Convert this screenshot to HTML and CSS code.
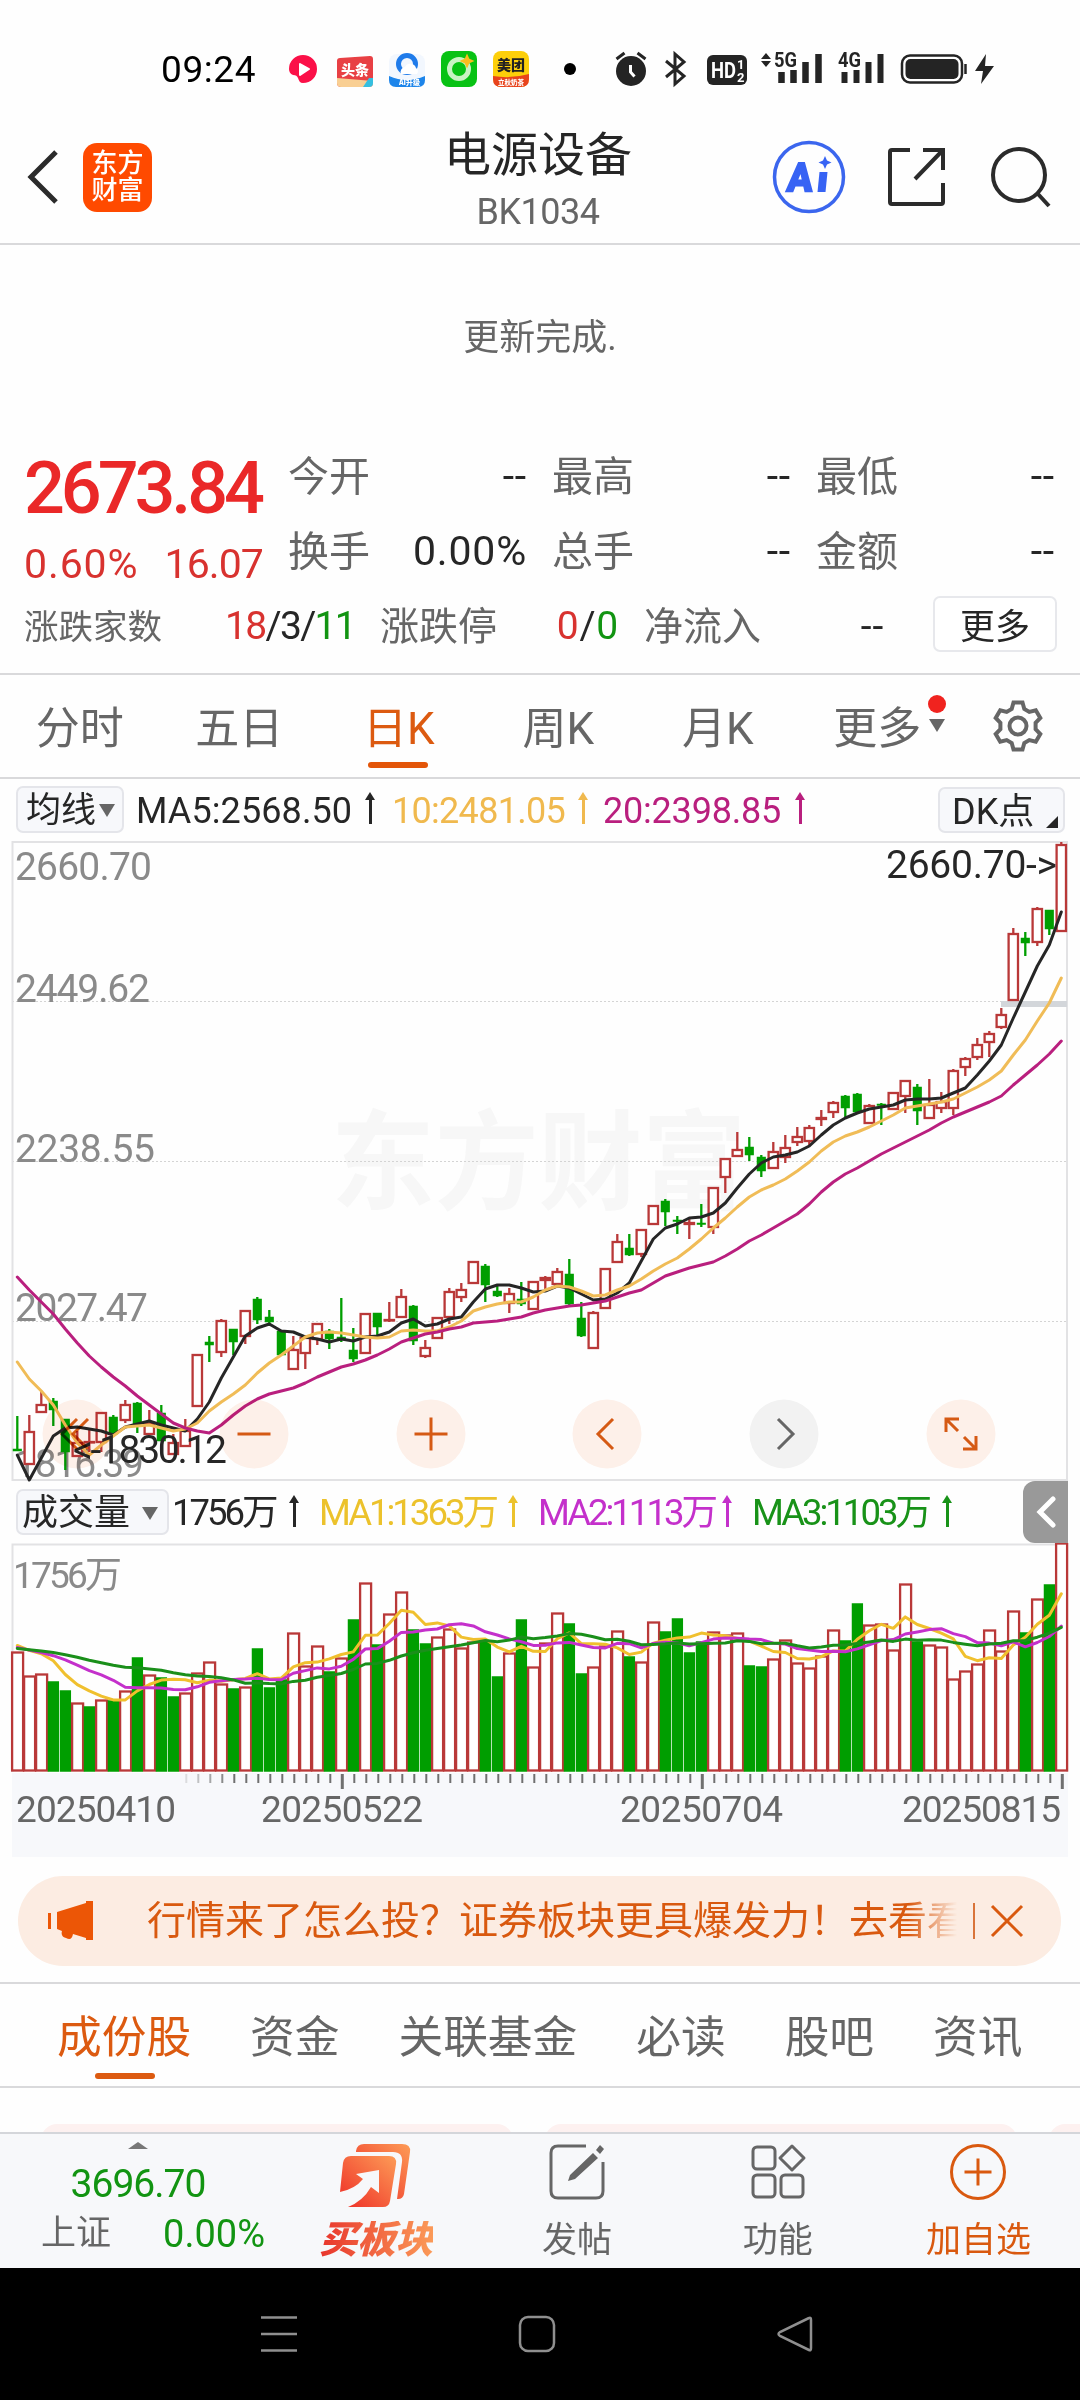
FILE: index.html
```
<!DOCTYPE html>
<html lang="zh-CN">
  <head>
    <meta charset="UTF-8" />
    <meta name="viewport" content="width=device-width, initial-scale=1.0" />
    <title>电源设备 BK1034</title>
    <link rel="stylesheet" href="styles.css">
  </head>
  <body>
    <div class="statusbar">
      <span class="time">09:24</span>
      <svg class="apps" width="300" height="44" viewBox="284 47 300 44">
        <path d="M303 55a14 14 0 0 1 14 14c0 8-6 14-14 14-3 0-4-2-5-5-1-2-2-3-5-3-3-1-4-4-4-6a14 14 0 0 1 14-14z" fill="#fb1048" />
        <path d="M300 64l9 5-9 6z" fill="#fff" stroke="#fff" stroke-width="2" stroke-linejoin="round" />
        <path d="M337 61q0-3 3-3l30-2q3 0 3 3v24q0 4-4 4h-28q-4 0-4-4z" fill="#e84044" />
        <path d="M337 78l36 3v2q0 4-4 4h-28q-4 0-4-4z" fill="#f9cf93" />
        <path d="M363 87l6-9h4v5q0 4-4 4z" fill="#35bfe0" />
        <text x="341" y="75" class="app-text" font-size="14" fill="#fff">头条</text>
        <rect x="389" y="54" width="36" height="33" rx="8" fill="#f2f7fe" />
        <path d="M389 76q18 8 36 0v4q0 7-7 7h-22q-7 0-7-7z" fill="#1d85ea" />
        <circle cx="407" cy="64" r="8.500" fill="none" stroke="#1f7bea" stroke-width="5" />
        <path d="M401 74a5 5 0 0 1 4-7 6 6 0 0 1 11 1 4 4 0 0 1 1 6z" fill="#fff" />
        <text x="399" y="85" class="app-text" font-size="7" fill="#fff">AI升级</text>
        <rect x="441" y="51" width="36" height="36" rx="8" fill="#08c214" />
        <circle cx="459" cy="69" r="9.500" fill="none" stroke="#c9f3c4" stroke-width="5" />
        <path d="M467 56l1.500 3.500 3.500 1.500-3.500 1.500-1.500 3.500-1.500-3.500-3.500-1.500 3.500-1.500z" fill="#fbbd1e" stroke="#fbbd1e" stroke-width="2" />
        <rect x="493" y="51" width="36" height="36" rx="8" fill="#fdcf0a" />
        <path d="M493 76q18 3 36-2v5q0 8-8 8h-20q-8 0-8-8z" fill="#e8431c" />
        <text x="497" y="70" class="app-text" font-size="14" fill="#222">美团</text>
        <text x="498" y="85" class="app-text" font-size="6.500" fill="#fff">立秋奶茶</text>
        <circle cx="570" cy="69" r="6" fill="#000" />
      </svg>
      <svg class="system" width="386" height="44" viewBox="612 47 386 44">
        <circle cx="631" cy="71" r="15" fill="#242424" />
        <path d="M616.500 59l8-6M645.500 59l-8-6" stroke="#242424" stroke-width="3" />
        <path d="M630.500 65v7l4 4.500" stroke="#fff" stroke-width="3" fill="none" />
        <path d="M666 61l18 15-9 8V54l9 8-18 15" fill="none" stroke="#242424" stroke-width="3" />
        <rect x="707" y="55" width="40" height="30" rx="6" fill="#242424" />
        <text x="711" y="78" class="bold" font-size="22" fill="#fff" textLength="25" lengthAdjust="spacingAndGlyphs">HD</text>
        <text x="737" y="69" class="bold" font-size="13" fill="#fff">1</text>
        <text x="737" y="82" class="bold" font-size="13" fill="#fff">2</text>
        <path d="M761 59l5-6 5 6zM761 61l5 6 5-6z" fill="#242424" />
        <text x="774" y="67" class="bold" font-size="20" fill="#242424" textLength="23" lengthAdjust="spacingAndGlyphs">5G</text>
        <path d="M781.500 83V72M793.500 83V70M805.500 83V62M818.500 83V54" stroke="#242424" stroke-width="6.500" />
        <text x="838" y="67" class="bold" font-size="20" fill="#242424" textLength="23" lengthAdjust="spacingAndGlyphs">4G</text>
        <path d="M844.500 83V72M856.500 83V70M868.500 83V62M880.500 83V54" stroke="#242424" stroke-width="6" />
        <rect x="902" y="55.500" width="60" height="27" rx="8" fill="#fff" stroke="#242424" stroke-width="2.500" />
        <rect x="905.500" y="59" width="53" height="20" rx="5" fill="#242424" />
        <path d="M965.500 64v10" stroke="#242424" stroke-width="2.500" />
        <path d="M986 54l-11 17h8l-2 13 13-18h-9z" fill="#242424" />
      </svg>
    </div>

    <div class="header">
      <svg class="back" width="34" height="56" viewBox="0 0 34 56"><path d="M30 3L5 28l25 25" fill="none" stroke="#2b2b2b" stroke-width="5" /></svg>
      <div class="logo">东方<br>财富</div>
      <div class="titles">
        <div class="title">电源设备</div>
        <div class="code">BK1034</div>
      </div>
      <svg class="ai" width="74" height="74" viewBox="0 0 74 74">
        <circle cx="37" cy="37" r="34.500" fill="none" stroke="#3b66ee" stroke-width="3.500" />
        <text x="15" y="51" class="bold" font-size="39" fill="#3763f4" stroke="#3763f4" stroke-width="2.500" transform="skewX(-5) translate(4 0)" textLength="25" lengthAdjust="spacingAndGlyphs">A</text>
        <path d="M47.500 32h8l-2 20h-8z" fill="#3763f4" />
        <path d="M53 16l2 4.500 4.500 2-4.500 2-2 4.500-2-4.500-4.500-2 4.500-2z" fill="#3763f4" />
      </svg>
      <svg class="share" width="60" height="60" viewBox="0 0 60 60">
        <path d="M23 3H5q-2 0-2 2v50q0 2 2 2h49q2 0 2-2V36M36 3h20v20M56 3L28 32" fill="none" stroke="#2b2b2b" stroke-width="4" />
      </svg>
      <svg class="search" width="62" height="62" viewBox="0 0 62 62">
        <circle cx="29" cy="29" r="26" fill="none" stroke="#2b2b2b" stroke-width="4" />
        <path d="M48 48l11 12" stroke="#2b2b2b" stroke-width="4" />
      </svg>
    </div>

    <div class="refresh">更新完成.</div>

    <div class="quote">
      <div class="price-box">
        <div class="price">2673.84</div>
        <div class="change"><span>0.60%</span><span>16.07</span></div>
      </div>
      <div class="stats">
        <div class="stat"><span>今开</span><b>--</b></div>
        <div class="stat"><span>最高</span><b>--</b></div>
        <div class="stat"><span>最低</span><b>--</b></div>
        <div class="stat"><span>换手</span><b>0.00%</b></div>
        <div class="stat"><span>总手</span><b>--</b></div>
        <div class="stat"><span>金额</span><b>--</b></div>
      </div>
    </div>
    <div class="breadth">
      <div class="stat count"><span>涨跌家数</span><b><i class="up">18</i>/3/<i class="down">11</i></b></div>
      <div class="stat limit"><span>涨跌停</span><b><i class="up">0</i>/<i class="down">0</i></b></div>
      <div class="stat inflow"><span>净流入</span><b>--</b></div>
      <button class="more-btn">更多</button>
    </div>

    <div class="period">
      <div>分时</div>
      <div>五日</div>
      <div class="active">日K</div>
      <div>周K</div>
      <div>月K</div>
      <div class="more">更多<i class="dot"></i><i class="caret"></i></div>
      <svg class="gear" width="54" height="54" viewBox="0 0 54 54">
        <path d="M22.500 3.500h9l1.800 6.500 5 2.900 6.500-1.700 4.500 7.800-4.700 4.800v6.400l4.700 4.800-4.500 7.800-6.500-1.700-5 2.900-1.800 6.500h-9l-1.800-6.500-5-2.900-6.500 1.700-4.500-7.800 4.700-4.800v-6.400l-4.700-4.800 4.500-7.800 6.500 1.700 5-2.900z" fill="none" stroke="#666" stroke-width="4" />
        <circle cx="27" cy="27" r="8.500" fill="none" stroke="#666" stroke-width="4" />
      </svg>
    </div>

    <div class="indicator ma">
      <div class="select">均线<i class="caret"></i></div>
      <span class="c-black">MA5:2568.50</span><i class="arrow c-black"></i>
      <span class="c-gold">10:2481.05</span><i class="arrow c-gold"></i>
      <span class="c-pink">20:2398.85</span><i class="arrow c-pink"></i>
      <div class="dk">DK点<i></i></div>
    </div>

    <div class="kline">
      <svg id="kline" width="1080" height="644" viewBox="0 0 1080 644">
        <text class="watermark" x="331" y="361" textLength="415" lengthAdjust="spacingAndGlyphs">东方财富</text>
        <g class="grid">
          <path d="M12 161.500H1068M12 321.500H1068M12 481.500H1068" />
        </g>
        <path class="frame" d="M12.500 640V2H1067V640z" />
        <rect x="1001" y="161" width="66" height="6" fill="#d3d6da" />
        <g class="axis">
          <text x="15" y="40" textLength="137">2660.70</text>
          <text x="15" y="162" textLength="135">2449.62</text>
          <text x="15" y="322" textLength="140">2238.55</text>
          <text x="15" y="481" textLength="133">2027.47</text>
          <text x="15" y="637" textLength="129">1816.39</text>
        </g>
      </svg>
      <div class="tools">
        <svg viewBox="-35 -35 70 70"><circle r="34.500" /><path d="M0-15L-15 0 0 15M11-15L-4 0 11 15" /></svg>
        <svg viewBox="-35 -35 70 70"><circle r="34.500" /><path d="M-16.500 0h33" /></svg>
        <svg viewBox="-35 -35 70 70"><circle r="34.500" /><path d="M-16.500 0h33M0-16.500v33" /></svg>
        <svg viewBox="-35 -35 70 70"><circle r="34.500" /><path d="M6-15L-9 0 6 15" /></svg>
        <svg class="off" viewBox="-35 -35 70 70"><circle r="34.500" /><path d="M-6-15L9 0-6 15" /></svg>
        <svg viewBox="-35 -35 70 70"><circle r="34.500" /><path d="M-2-15h-13V-2M-15-15L-3-3M2 15h13V2M15 15L3 3" /></svg>
      </div>
    </div>

    <div class="indicator vol">
      <div class="select">成交量<i class="caret"></i></div>
      <span class="c-black">1756万</span><i class="arrow c-black"></i>
      <span class="c-yellow">MA1:1363万</span><i class="arrow c-yellow"></i>
      <span class="c-violet">MA2:1113万</span><i class="arrow c-violet"></i>
      <span class="c-green">MA3:1103万</span><i class="arrow c-green"></i>
      <div class="fold"><svg width="20" height="32" viewBox="0 0 20 32"><path d="M17 3L4 16l13 13" /></svg></div>
    </div>

    <svg id="volume" width="1080" height="230" viewBox="0 0 1080 230">
      <path class="frame" d="M12.500 229V1.500H1067V229" />
      <text class="axis" x="13" y="45" textLength="109">1756万</text>
    </svg>
    <svg id="dates" width="1056" height="84" viewBox="12 1773 1056 84"></svg>

    <div class="banner">
      <svg width="46" height="40" viewBox="0 0 46 40"><path d="M1.500 12v16" stroke="#ec5606" stroke-width="3" /><path d="M9 11L38 2V0h7v39h-7v-2l-13-4c-1 5-3 6-7 4-4-1-5-4-4-7l-5-2z" fill="#ec5606" /></svg>
      <div class="marquee">行情来了怎么投？证券板块更具爆发力！去看看</div>
      <i class="split"></i>
      <svg class="close" width="34" height="34" viewBox="0 0 34 34"><path d="M2 2l30 30M32 2L2 32" stroke="#d9590f" stroke-width="3" /></svg>
    </div>

    <div class="sections">
      <div class="active">成份股</div>
      <div>资金</div>
      <div>关联基金</div>
      <div>必读</div>
      <div>股吧</div>
      <div>资讯</div>
    </div>
    <div class="cards"><i></i><i></i><i></i></div>

    <div class="bottombar">
      <div class="index">
        <i class="tri"></i>
        <div class="value">3696.70</div>
        <div class="row"><span>上证</span><b>0.00%</b></div>
      </div>
      <div class="item buy">
        <svg width="72" height="66" viewBox="0 0 72 66">
          <defs>
            <linearGradient id="hot" x1="0" y1="1" x2="1" y2="0">
              <stop offset="0" stop-color="#ee2d26" />
              <stop offset="1" stop-color="#fd9c57" />
            </linearGradient>
          </defs>
          <path d="M16 8q1-7 8-7h38q9 0 8 8l-6 42q-1 5-6 5h-1l5-37q1-10-9-10H16z" fill="url(#hot)" />
          <path d="M3 20q1-7 8-7h38q8 0 7 8l-6 37q-1 6-7 6H8q15-6 23-20l8 6V27l-23 4 7 5Q15 46 0 49z" fill="url(#hot)" />
        </svg>
        <span>买板块</span>
      </div>
      <div class="item">
        <svg width="58" height="58" viewBox="0 0 58 58"><path d="M38 3H10q-7 0-7 7v38q0 7 7 7h38q7 0 7-7V19" fill="none" stroke="#666" stroke-width="3" /><path d="M48 7l4-5 4 4-4 5zM45 10l5 5-23 21-7 2 2-6z" fill="#666" /></svg>
        <span>发帖</span>
      </div>
      <div class="item">
        <svg width="58" height="58" viewBox="0 0 58 58"><g fill="none" stroke="#666" stroke-width="3"><rect x="4" y="4" width="22" height="22" rx="4" /><rect x="4" y="32" width="22" height="22" rx="4" /><rect x="32" y="32" width="22" height="22" rx="4" /><path d="M43 3l12 12-12 12-12-12z" stroke-linejoin="round" /></g></svg>
        <span>功能</span>
      </div>
      <div class="item add">
        <svg width="58" height="58" viewBox="0 0 58 58"><circle cx="29" cy="29" r="26.500" /><path d="M15.500 29h27M29 15.500v27" /></svg>
        <span>加自选</span>
      </div>
    </div>
    <div class="navbar">
      <svg width="38" height="38" viewBox="0 0 38 38"><path d="M1 2.500h36M1 19h36M1 35.500h36" /></svg>
      <svg width="38" height="38" viewBox="0 0 38 38"><rect x="2" y="2" width="34" height="34" rx="8" /></svg>
      <svg width="38" height="38" viewBox="0 0 38 38"><path d="M33 3L4 17q-3 2 0 4l29 14q2 1 2-2V5q0-3-2-2z" /></svg>
    </div>

    <script src="chart.js"></script>
  </body>
</html>
```
FILE: styles.css
```
* {
  box-sizing: border-box;
}

body {
  width: 1080px;
  height: 2400px;
  margin: 0;
  overflow: hidden;
  background-color: #fefefe;
  color: #262626;
  font-family: Roboto, "Noto Sans CJK SC", sans-serif;
  font-weight: 400;
  line-height: 1;
}

svg {
  display: block;
  flex: none;
}

i, b {
  font-style: normal;
  font-weight: inherit;
}

.up { color: #d8322f; }
.down { color: #129412; }
.bold { font-weight: 700; }

/* status bar */
.statusbar {
  display: flex;
  height: 122px;
  padding: 47px 0 0 161px;
}

.time {
  width: 123px;
  font-size: 37px;
  letter-spacing: 0.6px;
  line-height: 46px;
  color: #000;
}

.app-text {
  font-weight: 900;
  font-family: "Noto Sans CJK SC", sans-serif;
}

.system {
  margin-left: 28px;
}

/* header */
.header {
  display: flex;
  align-items: center;
  height: 123px;
  padding: 0 26px 11px;
  border-bottom: 2px solid #d9d9db;
}

.logo {
  width: 69px;
  height: 69px;
  margin-left: 23px;
  padding-top: 7px;
  border-radius: 14px;
  background-color: #ff4a00;
  color: #fff;
  font-size: 26px;
  font-weight: 500;
  line-height: 27px;
  text-align: center;
}

.titles {
  flex: 1;
  padding: 10px 0 0 289px;
  text-align: center;
  white-space: nowrap;
}

.title {
  font-size: 47px;
  line-height: 52px;
  color: #262626;
}

.code {
  margin-top: 7px;
  font-size: 36px;
  letter-spacing: -0.5px;
  line-height: 48px;
  color: #666;
}

.ai {
  margin-left: 137px;
}

.share {
  margin-left: 41px;
}

.search {
  margin: 0 2px 0 43px;
}

.refresh {
  height: 194px;
  padding-top: 75px;
  color: #666;
  font-size: 36px;
  text-align: center;
}

/* quote */
.quote {
  display: flex;
  height: 152px;
  padding-left: 24px;
}

.price-box {
  width: 264px;
  padding-top: 3px;
  color: #d8322f;
}

.price {
  height: 93px;
  color: #ea2828;
  font-size: 72px;
  font-weight: 500;
  letter-spacing: -4.1px;
  line-height: 93px;
}

.change {
  display: flex;
  justify-content: space-between;
  width: 239px;
  font-size: 41px;
  line-height: 58px;
  letter-spacing: -0.9px;
}

.change span:first-child {
  letter-spacing: 0.9px;
}

.stats {
  display: grid;
  grid-template-columns: repeat(3, 239px);
  grid-auto-rows: 75px;
  column-gap: 25px;
}

.stat {
  display: flex;
  align-items: center;
  justify-content: space-between;
  font-size: 41px;
}

.stat span {
  padding-top: 2px;
  color: #666;
}

.stat b {
  letter-spacing: 0.8px;
}

.breadth {
  display: flex;
  align-items: center;
  height: 84px;
  padding: 0 0 12px 24px;
  border-bottom: 2px solid #d9d9db;
}

.breadth .stat {
  font-size: 39px;
}

.count { width: 331px; }
.breadth .count b { letter-spacing: -1.7px; }
.count span { font-size: 34.5px; }
.limit { width: 239px; margin-left: 25px; }
.inflow { width: 240px; margin-left: 25px; }

.more-btn {
  width: 124px;
  height: 56px;
  margin: 0 0 4px 49px;
  padding: 0 0 3px;
  border: 2px solid #e7e8ec;
  border-radius: 7px;
  background-color: #fff;
  color: #262626;
  font: 35px "Noto Sans CJK SC", sans-serif;
}

/* period tabs */
.period {
  display: grid;
  grid-template-columns: repeat(6, 159.5px) 1fr;
  align-items: center;
  height: 104px;
  border-bottom: 2px solid #d9d9db;
  color: #666;
  font-size: 44px;
  text-align: center;
}

.period > div {
  position: relative;
  padding-top: 6px;
}

.gear {
  margin-left: 34px;
}

.period .active,
.sections .active {
  color: #dc5a10;
}

.period .active::after {
  content: "";
  position: absolute;
  left: 49px;
  top: 61px;
  width: 60px;
  height: 6px;
  border-radius: 3px;
  background-color: #e35509;
}

.period .dot {
  position: absolute;
  right: 11px;
  top: -6px;
  width: 18px;
  height: 18px;
  border-radius: 50%;
  background-color: #f0231f;
}

.period .caret {
  position: absolute;
  right: 12px;
  top: 18px;
}

.caret {
  border: 8px solid transparent;
  border-top: 13px solid #666;
  border-bottom: 0;
}

/* indicator rows */
.indicator {
  display: flex;
  align-items: center;
  height: 62px;
  padding-left: 16px;
  font-size: 36px;
  white-space: nowrap;
}

.indicator.ma {
  height: 61px;
}

.indicator span {
  flex: none;
  padding-top: 2px;
}

.select {
  display: flex;
  flex: none;
  align-items: center;
  height: 47px;
  padding: 2px 0 0 8px;
  border: 2px solid #e4e5ea;
  border-radius: 7px;
  background-color: #f7f8fb;
}

.ma .select {
  width: 108px;
  font-size: 35px;
}

.ma .select .caret {
  margin-left: 3px;
}

.ma span {
  letter-spacing: -0.7px;
}

.arrow {
  position: relative;
  flex: none;
  width: 3px;
  height: 29px;
  background-color: currentColor;
}

.arrow::before {
  content: "";
  position: absolute;
  left: -4px;
  top: -3px;
  border: 5.5px solid transparent;
  border-top: 0;
  border-bottom: 8px solid currentColor;
}

.c-black { color: #262626; }
.c-gold { color: #f0b94e; }
.c-pink { color: #b91f7e; }
.c-yellow { color: #ecc22c; }
.c-violet { color: #c430cb; }
.c-green { color: #189218; }

.ma span.c-black { margin-left: 12px; width: 233px; letter-spacing: 0.1px; }
.ma span.c-gold { margin-left: 20px; width: 190px; }
.ma span.c-pink { margin-left: 18px; width: 196px; letter-spacing: -0.2px; }

.dk {
  position: relative;
  width: 127px;
  height: 46px;
  margin-left: auto;
  margin-right: 15px;
  padding-left: 12px;
  border: 2px solid #e4e5ea;
  border-radius: 7px;
  background-color: #f7f8fb;
  font-size: 36px;
  line-height: 46px;
}

.dk i {
  position: absolute;
  right: 5px;
  bottom: 3px;
  border-left: 12px solid transparent;
  border-bottom: 12px solid #262626;
}

.vol .select {
  width: 153px;
  height: 46px;
  padding-left: 4px;
  font-size: 36px;
}

.vol .select .caret {
  margin-left: 12px;
}

.vol span {
  font-size: 36.5px;
  letter-spacing: -3px;
}

.vol span.c-black { margin-left: 3px; width: 121px; }
.vol span.c-yellow { margin-left: 23px; width: 193px; }
.vol span.c-violet { margin-left: 23px; width: 188px; }
.vol span.c-green { margin-left: 23px; width: 194px; }

.fold {
  display: flex;
  flex: none;
  align-items: center;
  justify-content: center;
  width: 45px;
  height: 62px;
  margin: 0 12px 0 auto;
  border-radius: 12px 0 0 12px;
  background-color: #999;
}

.fold path {
  fill: none;
  stroke: #fff;
  stroke-width: 5;
  stroke-linecap: round;
}

/* charts */
.kline {
  position: relative;
  height: 641px;
}

.grid path {
  stroke: #d4d4d4;
  stroke-dasharray: 2 2;
}

.frame {
  fill: none;
  stroke: #e2e2e4;
  stroke-width: 2;
}

.axis {
  fill: #8a8a8a;
  font-size: 39px;
}

#volume .axis {
  font-size: 37px;
}

.watermark {
  fill: #f7f7f7;
  font-size: 108px;
  font-weight: 700;
}

.candle-up {
  fill: #fff;
  stroke: #b93838;
  stroke-width: 2.3;
}

.candle-down {
  fill: #009e00;
  stroke: #009e00;
  stroke-width: 1.5;
}

.wick {
  stroke-width: 2.3;
}

.line {
  fill: none;
  stroke-width: 3;
  stroke-linejoin: round;
  stroke-linecap: round;
}

.mark {
  fill: #262626;
  font-size: 39px;
}

.tools {
  position: absolute;
  left: 42px;
  top: 559px;
  display: flex;
  gap: 106.8px;
  mix-blend-mode: multiply;
}

.tools svg {
  width: 70px;
  height: 70px;
}

.tools circle {
  fill: #fef1ea;
}

.tools path {
  fill: none;
  stroke: #d65a14;
  stroke-width: 3;
}

.tools .off circle {
  fill: #f3f3f3;
}

.tools .off path {
  stroke: #666;
}

#dates {
  margin-left: 12px;
  background-color: #f7f8fb;
}

#dates text {
  fill: #666;
  font-size: 37px;
}

/* promo banner */
.banner {
  display: flex;
  align-items: center;
  width: 1043px;
  height: 90px;
  margin: 19px 0 16px 18px;
  padding-left: 30px;
  border-radius: 45px;
  background-color: #fcece2;
}

.marquee {
  width: 810px;
  margin-left: 53px;
  overflow: hidden;
  color: #d9590f;
  font-size: 39px;
  line-height: 56px;
  white-space: nowrap;
  -webkit-mask-image: linear-gradient(90deg, #000 94%, transparent);
  mask-image: linear-gradient(90deg, #000 94%, transparent);
}

.split {
  width: 2px;
  height: 36px;
  margin: 0 15px 0 16px;
  background-color: #d9743a;
}

/* section tabs */
.sections {
  display: flex;
  align-items: center;
  gap: 59px;
  height: 106px;
  padding: 7px 0 0 57px;
  border-top: 2px solid #d9d9db;
  border-bottom: 2px solid #d9d9db;
  color: #666;
  font-size: 44.7px;
  white-space: nowrap;
}

.sections .active {
  position: relative;
}

.sections .active::after {
  content: "";
  position: absolute;
  left: 38px;
  top: 57px;
  width: 60px;
  height: 6px;
  border-radius: 3px;
  background-color: #dc5a10;
}

.cards {
  display: flex;
  gap: 32px;
  height: 44px;
  padding: 36px 0 0 41px;
  overflow: hidden;
}

.cards i {
  flex: none;
  width: 472px;
  height: 60px;
  border-radius: 16px;
  background-color: #fdf1f0;
}

/* bottom bar */
.bottombar {
  display: grid;
  grid-template-columns: 276px repeat(4, 200.7px);
  height: 136px;
  border-top: 2px solid #d4d6da;
  background-color: #f7f8fa;
  color: #666;
  font-size: 35px;
}

.index {
  display: flex;
  flex-direction: column;
  align-items: center;
  padding-top: 8px;
}

.tri {
  border: 10px solid transparent;
  border-top: 0;
  border-bottom: 7px solid #777;
}

.value {
  margin-top: 10px;
  color: #129412;
  font-size: 39px;
  letter-spacing: -1px;
  line-height: 50px;
}

.index .row {
  display: flex;
  justify-content: space-between;
  width: 224px;
  margin-left: 30px;
  line-height: 50px;
}

.row b {
  color: #129412;
  font-size: 38px;
}

.item {
  display: flex;
  flex-direction: column;
  align-items: center;
  padding-top: 9px;
}

.item span {
  margin-top: 22px;
}

.item.buy span {
  margin-top: 12px;
  font-size: 38px;
  font-style: italic;
  font-weight: 900;
  background: linear-gradient(90deg, #e8352c, #fb9a58);
  -webkit-background-clip: text;
  background-clip: text;
  color: transparent;
}

.add {
  color: #d9590f;
}

.add svg {
  fill: none;
  stroke: #d9590f;
  stroke-width: 3;
}

.navbar {
  display: flex;
  justify-content: center;
  gap: 220px;
  height: 132px;
  padding: 47px 7px 0 0;
  background-color: #000;
}

.navbar svg {
  fill: none;
  stroke: #8f8f8f;
  stroke-width: 2.5;
}
```
FILE: chart.js
```
const NS = "http://www.w3.org/2000/svg";
const STEP = 12;
const X0 = 17.3;
const BASE = 228.5;

// [up?, high, top, bottom, low]
const candles = [
  [0,576,609,611,611],[1,575,591,625,625],[1,552,564,573,573],[0,558,561,570,586],[0,579,579,612,630],
  [1,591,602,617,617],[1,589,601,602,612],[1,572,572,603,612],[0,575,577,594,594],[1,560,564,581,583],
  [0,562,563,584,593],[1,570,583,595,595],[0,565,573,601,601],[1,594,602,615,615],[1,579,590,607,607],
  [1,514,514,567,567],[0,496,502,505,522],[1,479,480,513,517],[0,489,489,502,515],[1,470,470,497,504],
  [0,457,459,480,484],[0,470,477,482,486],[0,491,491,515,515],[1,496,509,530,530],[1,495,497,514,529],
  [1,483,483,500,505],[0,489,491,499,509],[0,458,497,499,502],[0,488,510,519,522],[1,473,473,514,514],
  [0,473,473,487,495],[1,462,479,480,482],[1,449,456,478,478],[0,465,466,501,505],[1,500,507,517,518],
  [1,477,477,499,499],[1,448,451,478,484],[1,443,449,458,462],[1,421,421,444,444],[0,424,426,445,462],
  [0,445,451,456,457],[1,448,453,464,473],[0,442,459,464,466],[1,441,441,470,470],[1,436,437,441,452],
  [1,428,431,445,447],[0,419,434,464,465],[0,462,478,496,497],[1,471,472,509,509],[1,428,428,469,469],
  [1,394,401,423,423],[0,394,408,415,416],[1,389,389,415,417],[1,365,365,385,385],[0,359,361,372,386],
  [0,376,380,381,394],[1,379,382,385,399],[0,364,383,384,387],[1,347,347,388,394],[1,318,318,338,353],
  [1,292,309,317,317],[0,297,307,315,321],[0,315,317,331,337],[1,302,311,329,329],[1,295,307,318,323],
  [1,287,296,303,306],[1,285,287,302,305],[1,270,277,280,286],[1,261,262,273,278],[0,255,256,268,277],
  [0,253,254,272,272],[1,264,265,284,284],[0,263,264,265,285],[1,252,252,270,270],[1,240,240,257,273],
  [0,244,247,271,285],[1,239,264,279,279],[1,252,261,269,273],[1,229,230,269,275],[1,217,218,228,236],
  [1,198,204,218,220],[1,191,193,203,217],[1,168,174,188,189],[1,88,93,161,161],[0,92,98,103,116],
  [1,67,68,103,106],[0,70,70,89,95],[1,2,4,92,92]
];

const ma5 = [
  615,640,618,596,588,587,589,591,595,587,584,581,585,588,591,579,562,538,517,496,488,484,
  491,492,497,499,502,499,501,497,496,492,483,479,486,484,479,477,462,449,445,445,448,452,
  451,446,448,454,460,459,453,443,421,399,388,384,378,377,373,363,348,334,323,317,315,312,
  306,295,285,278,273,269,267,265,260,259,259,258,253,248,235,221,205,178,152,126,105,72
];
const ma10 = [
  522,539,551,565,585,603,615,605,596,587,586,585,588,591,589,583,571,562,554,545,533,523,
  515,506,497,493,492,493,495,497,498,497,491,490,491,491,487,481,471,467,464,462,462,457,
  450,446,447,451,456,455,450,446,439,431,424,418,409,399,388,378,367,357,350,345,339,331,
  322,311,302,296,292,287,281,275,268,266,264,262,259,253,247,240,231,215,200,181,163,138
];
const ma20 = [
  437,450,462,474,489,503,516,527,537,546,556,565,574,583,588,591,593,585,575,566,559,554,
  551,548,543,537,532,527,524,520,515,509,502,498,494,492,489,487,483,482,481,479,477,473,
  470,468,466,465,463,461,457,453,450,443,436,432,428,425,422,416,409,401,395,388,381,374,
  364,352,342,334,328,321,314,308,302,296,290,283,277,272,267,262,256,245,235,225,214,201
];

const volumes = [
  120,96,98,90,81,69,65,72,71,81,114,97,94,75,79,99,110,88,83,85,123,84,
  92,139,106,126,100,114,152,189,127,158,180,142,128,135,143,124,130,130,95,119,152,105,
  129,159,148,98,105,126,141,115,110,150,140,153,119,130,140,137,139,106,105,113,132,109,
  104,116,142,131,168,147,148,122,188,130,127,125,93,101,108,142,121,161,139,173,187,229
];
// volumes of the sessions before the first visible one
const earlier = [
  122,122,122,122,122,122,122,122,122,122,122,122,122,122,122,120,115,125,150
];
// sessions whose volume bar is green
const falling = [
  3,4,6,8,10,12,13,18,20,21,22,26,28,30,33,34,39,40,42,46,47,51,54,55,56,57,61,62,69,70,75,84,86
];

function add(parent, name, attrs, text) {
  const el = document.createElementNS(NS, name);
  for (const key in attrs) el.setAttribute(key, attrs[key]);
  if (text) el.textContent = text;
  parent.appendChild(el);
  return el;
}

function line(parent, values, color) {
  const points = values.map((y, i) => (X0 + i * STEP).toFixed(1) + "," + y.toFixed(1)).join(" ");
  add(parent, "polyline", { class: "line", points: points, stroke: color });
}

function average(n) {
  const all = earlier.concat(volumes);
  return volumes.map((v, i) => {
    const end = i + earlier.length + 1;
    return BASE - all.slice(end - n, end).reduce((a, b) => a + b, 0) / n;
  });
}

function drawKline() {
  const svg = document.getElementById("kline");
  candles.forEach(([up, high, top, bottom, low], i) => {
    const x = X0 + i * STEP;
    const color = up ? "#b93838" : "#009e00";
    add(svg, "path", { class: "wick", d: `M${x} ${high}V${top}M${x} ${bottom}V${low}`, stroke: color });
    add(svg, "rect", {
      class: up ? "candle-up" : "candle-down",
      x: x - (up ? 4.7 : 3.8),
      y: top + (up ? 1 : 0.5),
      width: up ? 9.4 : 7.6,
      height: Math.max(bottom - top - (up ? 2 : 1), 0.5)
    });
  });
  line(svg, ma5, "#262626");
  line(svg, ma10, "#f0bc57");
  line(svg, ma20, "#b91f7e");
  add(svg, "text", { class: "mark", x: 886, y: 38, textLength: 171 }, "2660.70->");
  add(svg, "text", { class: "mark", x: 73, y: 623, textLength: 154 }, "<-1830.12");
}

function drawVolume() {
  const svg = document.getElementById("volume");
  volumes.forEach((v, i) => {
    const up = !falling.includes(i);
    const x = X0 + i * STEP;
    add(svg, "rect", {
      class: up ? "candle-up" : "candle-down",
      x: x - (up ? 5.2 : 4.8),
      y: BASE - v + (up ? 1 : 0.5),
      width: up ? 11 : 9.8,
      height: v - (up ? 2 : 1)
    });
  });
  line(svg, average(5), "#f0c02e");
  line(svg, average(10), "#c430cb");
  line(svg, average(20), "#1a8f1a");
}

function drawDates() {
  const svg = document.getElementById("dates");
  for (let i = 14; i < 88; i++) {
    const long = i === 27 || i === 57 || i === 87;
    const x = 18.3 + i * STEP;
    add(svg, "path", {
      d: `M${x} 1774V${long ? 1789 : 1783}`,
      stroke: "#707070",
      "stroke-width": long ? 3 : 2,
      opacity: Math.min(1, (i - 13) / 5)
    });
  }
  add(svg, "text", { x: 16, y: 1822, textLength: 160 }, "20250410");
  add(svg, "text", { x: 261, y: 1822, textLength: 162 }, "20250522");
  add(svg, "text", { x: 620, y: 1822, textLength: 163 }, "20250704");
  add(svg, "text", { x: 902, y: 1822, textLength: 159 }, "20250815");
}

drawKline();
drawVolume();
drawDates();
```
